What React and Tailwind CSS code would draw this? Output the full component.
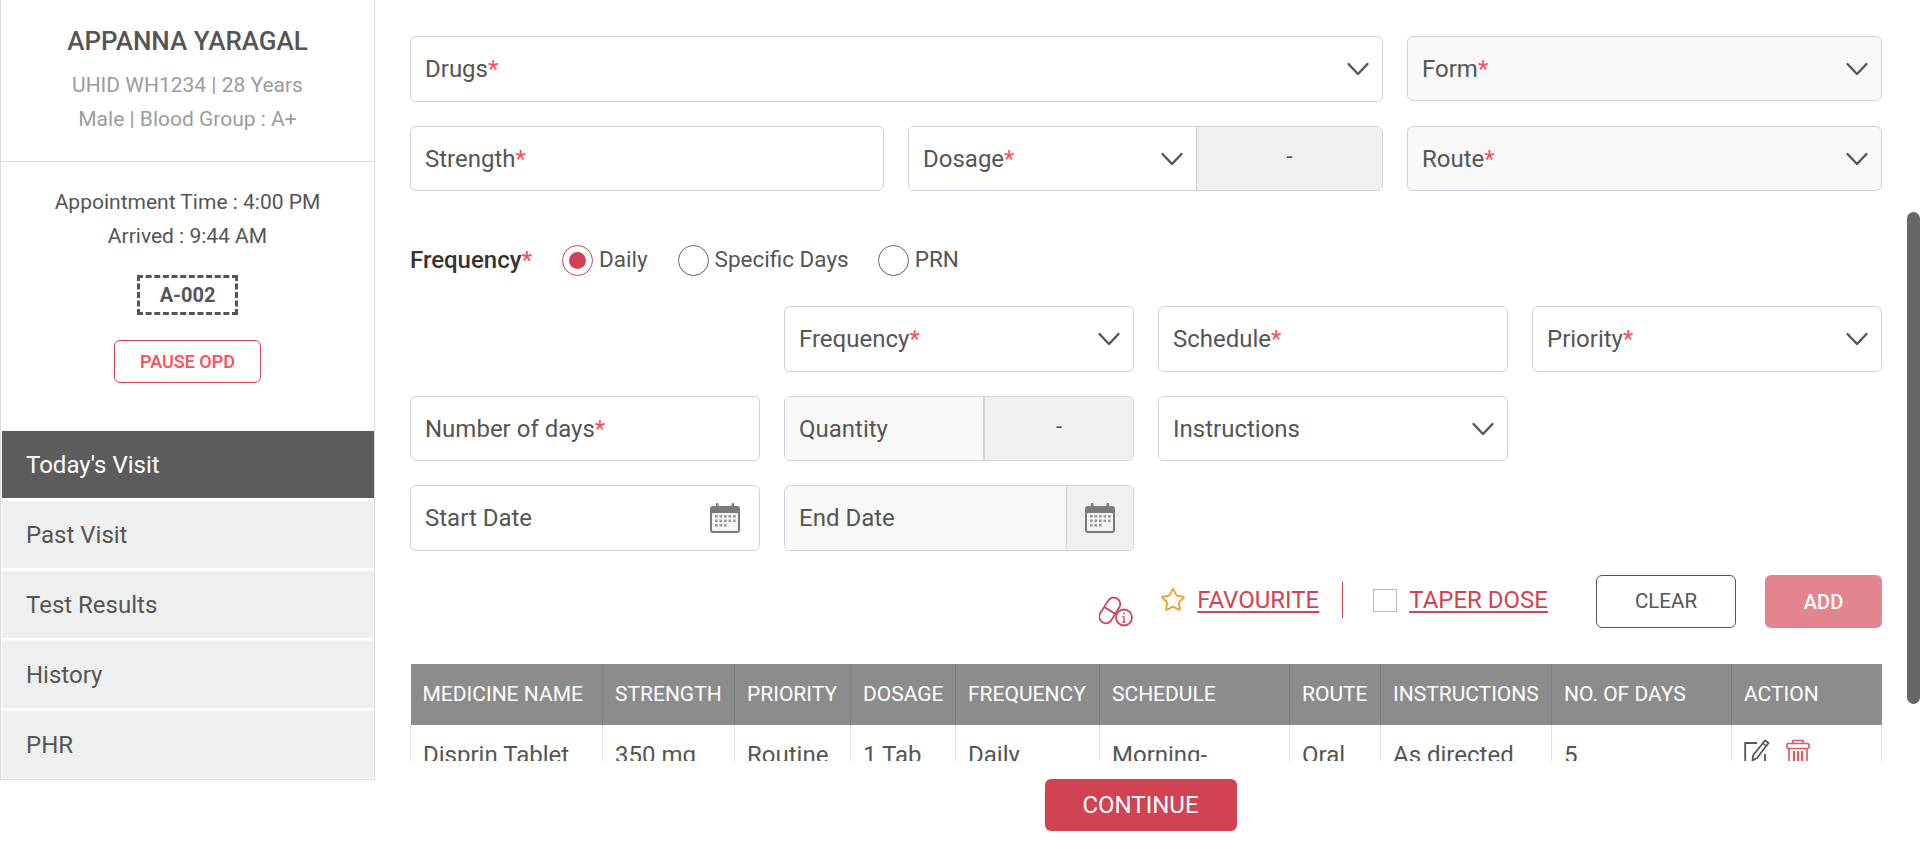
import React from "react";
import { Star } from "lucide-react";

const NAV = ["Past Visit", "Test Results", "History", "PHR"];

const COLUMNS = [
  { label: "MEDICINE NAME", value: "Disprin Tablet", width: "w-[192px]" },
  { label: "STRENGTH", value: "350 mg", width: "w-[132px]" },
  { label: "PRIORITY", value: "Routine", width: "w-[116px]" },
  { label: "DOSAGE", value: "1 Tab", width: "w-[105px]" },
  { label: "FREQUENCY", value: "Daily", width: "w-[144px]" },
  { label: "SCHEDULE", value: "Morning-", width: "w-[190px]" },
  { label: "ROUTE", value: "Oral", width: "w-[91px]" },
  { label: "INSTRUCTIONS", value: "As directed", width: "w-[171px]" },
  { label: "NO. OF DAYS", value: "5", width: "w-[180px]" },
];

function Chevron() {
  return (
    <svg width="24" height="24" viewBox="0 0 24 24" fill="none" stroke="#555" strokeWidth="2.4" strokeLinecap="round" strokeLinejoin="round" className="shrink-0">
      <path d="M2.5 7 L12 17 L21.5 7" />
    </svg>
  );
}

function CalendarIcon() {
  return (
    <svg width="32" height="32" viewBox="0 0 32 32" className="shrink-0">
      <rect x="1" y="4" width="30" height="27" rx="3" fill="#7a7a7a" />
      <rect x="3" y="11" width="26" height="18" rx="1" fill="#f4f4f4" />
      <rect x="7" y="1" width="2.5" height="7" rx="1" fill="#7a7a7a" />
      <rect x="22.5" y="1" width="2.5" height="7" rx="1" fill="#7a7a7a" />
      <g fill="#9a9a9a">
        {[13, 17.5, 22].map((y) =>
          [6, 10.5, 15, 19.5, 24].map((x) =>
            y === 22 && x > 15 ? null : <rect key={`${x}-${y}`} x={x} y={y} width="2.6" height="2.6" />
          )
        )}
      </g>
    </svg>
  );
}

function PillInfo() {
  return (
    <svg width="34" height="32" viewBox="0 0 34 32" fill="none" stroke="#d14352" strokeWidth="1.8" className="shrink-0">
      <g transform="rotate(32 11 15)">
        <rect x="4.5" y="1.5" width="13" height="28" rx="6.5" />
        <path d="M4.5 15.5 H17.5" />
      </g>
      <circle cx="25" cy="22.5" r="8" fill="#fff" />
      <path d="M25 21.5 V27 M23.5 21.5 H25 M23.5 27 H26.5" strokeWidth="1.4" />
      <circle cx="25" cy="18.5" r="0.9" fill="#d14352" stroke="none" />
    </svg>
  );
}

function EditIcon() {
  return (
    <svg width="26" height="30" viewBox="0 0 26 30" fill="none" className="shrink-0">
      <path d="M13 4 H1.2 V30 M21 15 V30" stroke="#555" strokeWidth="1.8" />
      <path d="M21 1.5 L24.5 4 L13 19 L8.5 21.5 L9 16.5 Z" stroke="#555" strokeWidth="1.8" strokeLinejoin="round" />
      <path d="M19 4.5 L22.5 7" stroke="#555" strokeWidth="1.4" />
    </svg>
  );
}

function TrashIcon() {
  return (
    <svg width="24" height="30" viewBox="0 0 24 30" fill="none" stroke="#e0596a" strokeWidth="1.7" className="shrink-0">
      <path d="M7 4.5 V1.5 H17 V4.5" />
      <rect x="1" y="4.5" width="22" height="5" rx="1.5" />
      <path d="M3 9.5 V30 H21 V9.5" />
      <path d="M8 12 V28 M12 12 V28 M16 12 V28" strokeWidth="2.2" />
    </svg>
  );
}

function Label({ text, required }) {
  return (
    <span>
      {text}
      {required && <span className="text-[#ff4d58]">*</span>}
    </span>
  );
}

function Select({ label, required, muted, className = "" }) {
  return (
    <div className={`flex items-center justify-between rounded-md border border-[#ced4da] pl-[14px] pr-[12px] ${muted ? "bg-[#f8f8f8]" : "bg-white"} ${className}`}>
      <Label text={label} required={required} />
      <Chevron />
    </div>
  );
}

function TextField({ label, required, className = "" }) {
  return (
    <div className={`flex items-center rounded-md border border-[#ced4da] bg-white pl-[14px] ${className}`}>
      <Label text={label} required={required} />
    </div>
  );
}

function Radio({ label, checked }) {
  return (
    <div className="flex items-center gap-[6px] text-[22.5px]">
      {checked ? (
        <span className="flex h-[31px] w-[31px] items-center justify-center rounded-full border border-[#d14352] bg-white">
          <span className="h-[17px] w-[17px] rounded-full bg-[#d14352]" />
        </span>
      ) : (
        <span className="h-[31px] w-[31px] rounded-full border border-[#666] bg-white" />
      )}
      <span>{label}</span>
    </div>
  );
}

export default function App() {
  return (
    <div className="relative flex h-[849px] w-full items-start overflow-hidden bg-white font-['Roboto',sans-serif] text-[24px] text-[#555]">
      {/* Sidebar */}
      <aside className="h-[780px] w-[375px] shrink-0 border border-t-0 border-[#dcdcdc] pt-[1px]">
        <div className="h-[161px] border-b border-[#dcdcdc] pt-[24px] text-center">
          <div className="text-[26px] font-medium leading-[32px]">APPANNA YARAGAL</div>
          <div className="mt-[11px] text-[21px] leading-[34px] text-[#9c9c9c]">UHID WH1234 | 28 Years</div>
          <div className="text-[21px] leading-[34px] text-[#9c9c9c]">Male | Blood Group : A+</div>
        </div>
        <div className="flex h-[269px] flex-col items-center pt-[23px]">
          <div className="text-[21px] leading-[34px]">Appointment Time : 4:00 PM</div>
          <div className="text-[21px] leading-[34px]">Arrived : 9:44 AM</div>
          <div className="mt-[22px] flex h-[40px] w-[101px] items-center justify-center border-[3px] border-dashed border-[#555] text-[20px] font-bold">A-002</div>
          <div className="mt-[25px] flex h-[43px] w-[147px] items-center justify-center rounded-md border border-[#d14352] text-[18px] font-medium text-[#ff4d58]">PAUSE OPD</div>
        </div>
        <nav className="flex flex-col gap-[3px] pl-[1px]">
          <div className="flex h-[67px] items-center bg-[#5c5c5c] pl-[24px] text-white">Today's Visit</div>
          {NAV.map((item) => (
            <div key={item} className="flex h-[67px] items-center bg-[#eef0ef] pl-[24px]">{item}</div>
          ))}
        </nav>
      </aside>

      {/* Main */}
      <main className="min-w-0 flex-1">
        <div className="h-[761px] overflow-hidden pl-[35px] pr-[38px] pt-[36px]">
          <div className="grid grid-cols-[474px_475px_475px] gap-[24px]">
            <Select label="Drugs" required className="col-span-2 h-[66px]" />
            <Select label="Form" required muted className="h-[65px]" />
            <TextField label="Strength" required className="h-[65px]" />
            <div className="flex h-[65px] overflow-hidden rounded-md border border-[#ced4da]">
              <Select label="Dosage" required className="flex-1 rounded-none border-0" />
              <div className="flex w-[186px] items-center justify-center border-l border-[#cfcfcf] bg-[#eff1f0] pb-[4px] text-[22px]">-</div>
            </div>
            <Select label="Route" required muted className="h-[65px]" />
          </div>

          <div className="mt-[53px] flex h-[32px] items-center">
            <span className="w-[152px] font-medium text-[#333]">
              Frequency<span className="text-[#ff4d58]">*</span>
            </span>
            <Radio label="Daily" checked />
            <div className="ml-[30px]"><Radio label="Specific Days" /></div>
            <div className="ml-[29px]"><Radio label="PRN" /></div>
          </div>

          <div className="mt-[30px] grid grid-cols-4 gap-[24px]">
            <div />
            <Select label="Frequency" required className="h-[66px]" />
            <TextField label="Schedule" required className="h-[66px]" />
            <Select label="Priority" required className="h-[66px]" />
            <TextField label="Number of days" required className="h-[65px]" />
            <div className="flex h-[65px] overflow-hidden rounded-md border border-[#ced4da]">
              <div className="flex w-[200px] items-center border-r-2 border-[#d4d4d4] bg-[#f8f8f8] pl-[14px]">Quantity</div>
              <div className="flex flex-1 items-center justify-center bg-[#eff1f0] pb-[4px] text-[22px]">-</div>
            </div>
            <Select label="Instructions" className="h-[65px]" />
            <div />
            <div className="flex h-[66px] items-center justify-between rounded-md border border-[#ced4da] pl-[14px] pr-[18px]">
              <span>Start Date</span>
              <CalendarIcon />
            </div>
            <div className="flex h-[66px] overflow-hidden rounded-md border border-[#ced4da] bg-[#f8f8f8]">
              <div className="flex flex-1 items-center pl-[14px]">End Date</div>
              <div className="flex w-[67px] items-center justify-center border-l border-[#d4d4d4] bg-[#eff1f0]">
                <CalendarIcon />
              </div>
            </div>
          </div>

          <div className="mt-[24px] flex h-[53px] items-center justify-end">
            <div className="mt-[18px]"><PillInfo /></div>
            <div className="mb-[3px] flex items-center">
              <Star size={26} strokeWidth={1.6} color="#f39a1f" className="ml-[27px] mr-[11px] shrink-0" />
              <span className="text-[#d14352] underline underline-offset-[3px]">FAVOURITE</span>
              <span className="ml-[23px] h-[36px] w-px bg-[#d14352]" />
              <span className="ml-[30px] h-[23px] w-[24px] border border-[#b5bcc4]" />
              <span className="ml-[12px] text-[#d14352] underline underline-offset-[3px]">TAPER DOSE</span>
            </div>
            <button className="ml-[48px] h-[53px] w-[140px] rounded-md border border-[#555] bg-white text-[20.5px]">CLEAR</button>
            <button className="ml-[29px] h-[53px] w-[117px] rounded-md bg-[#e3858f] text-[20px] font-medium text-white">ADD</button>
          </div>

          <table className="mt-[36px] w-[1472px] table-fixed border-collapse">
            <thead>
              <tr className="h-[61px] bg-[#8c8c8c] text-left text-[21px] text-white">
                {COLUMNS.map((col) => (
                  <th key={col.label} className={`${col.width} border-r border-[#7d7d7d] pl-[12px] font-normal`}>{col.label}</th>
                ))}
                <th className="pl-[12px] font-normal">ACTION</th>
              </tr>
            </thead>
            <tbody>
              <tr className="align-top">
                {COLUMNS.map((col) => (
                  <td key={col.label} className="border-x border-[#e2e2e2] pl-[12px] pt-[15px] leading-[30px]">{col.value}</td>
                ))}
                <td className="border-x border-[#e2e2e2] pl-[12px] pt-[14px]">
                  <div className="flex gap-[16px]">
                    <EditIcon />
                    <TrashIcon />
                  </div>
                </td>
              </tr>
            </tbody>
          </table>
        </div>

        <div className="mt-[18px] flex justify-center pr-[14px]">
          <button className="h-[52px] w-[192px] rounded-md bg-[#d14352] text-white">CONTINUE</button>
        </div>
      </main>

      {/* Scrollbar thumb */}
      <div className="absolute right-0 top-[212px] h-[492px] w-[13px] rounded-full bg-[#666]" />
    </div>
  );
}
